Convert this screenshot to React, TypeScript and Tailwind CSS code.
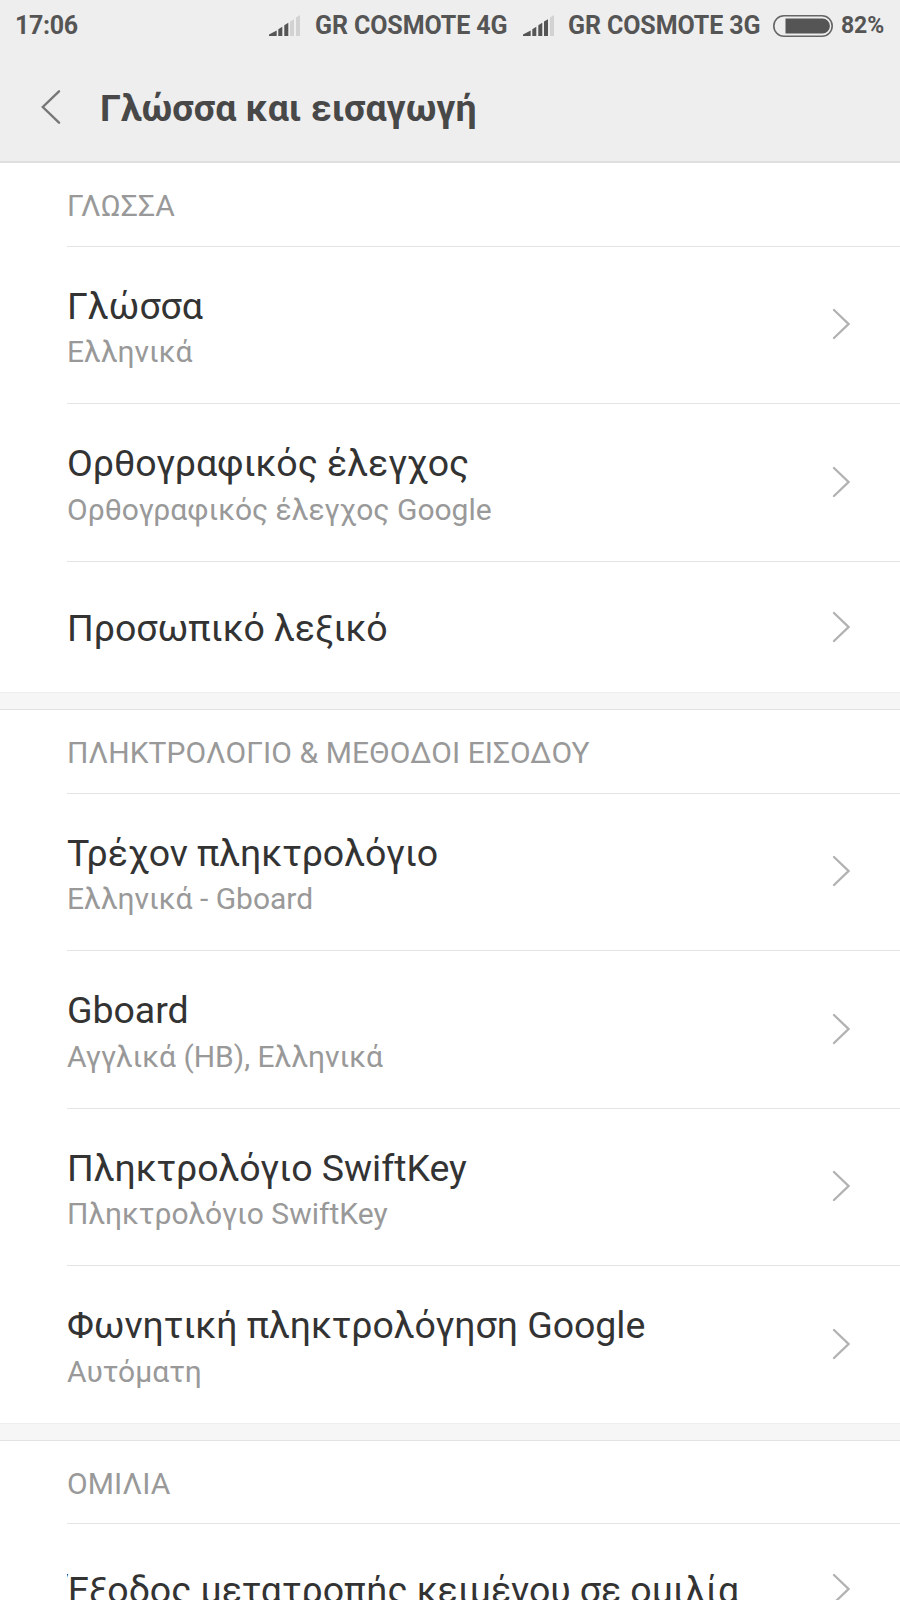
import React from "react";

type Item = {
  title: string;
  summary?: string;
};

type Section = {
  heading: string;
  items: Item[];
};

const sections: Section[] = [
  {
    heading: "ΓΛΩΣΣΑ",
    items: [
      { title: "Γλώσσα", summary: "Ελληνικά" },
      {
        title: "Ορθογραφικός έλεγχος",
        summary: "Ορθογραφικός έλεγχος Google",
      },
      { title: "Προσωπικό λεξικό" },
    ],
  },
  {
    heading: "ΠΛΗΚΤΡΟΛΟΓΙΟ & ΜΕΘΟΔΟΙ ΕΙΣΟΔΟΥ",
    items: [
      { title: "Τρέχον πληκτρολόγιο", summary: "Ελληνικά - Gboard" },
      { title: "Gboard", summary: "Αγγλικά (ΗΒ), Ελληνικά" },
      { title: "Πληκτρολόγιο SwiftKey", summary: "Πληκτρολόγιο SwiftKey" },
      { title: "Φωνητική πληκτρολόγηση Google", summary: "Αυτόματη" },
    ],
  },
  {
    heading: "ΟΜΙΛΙΑ",
    items: [{ title: "Έξοδος μετατροπής κειμένου σε ομιλία" }],
  },
];

const Signal: React.FC<{ level: number }> = ({ level }) => {
  const bars = [
    "M0 21V19.5L7.7 15.5V21Z",
    "M9.3 21V14.2L13.3 11.8V21Z",
    "M15.3 21V10.2L19.3 7.8V21Z",
    "M21 21V6.6L25 4.2V21Z",
    "M27 21V2.6L31 0V21Z",
  ];
  return (
    <svg width="31" height="21" viewBox="0 0 31 21" className="shrink-0">
      {bars.map((d, i) => (
        <path key={d} d={d} fill={i < level ? "#555555" : "#d2d2d2"} />
      ))}
    </svg>
  );
};

const Battery: React.FC = () => (
  <svg width="60" height="22" viewBox="0 0 60 22" className="shrink-0">
    <rect
      x="0.8"
      y="0.8"
      width="58.4"
      height="20.4"
      rx="10.2"
      fill="none"
      stroke="#666666"
      strokeWidth="1.6"
    />
    <path d="M12.5 3.6H49.5A7.4 7.4 0 0 1 49.5 18.4H12.5Z" fill="#555555" />
  </svg>
);

const Row: React.FC<{ item: Item }> = ({ item }) => (
  <div
    className={
      item.summary
        ? "flex h-[157.5px] items-start pt-[37px]"
        : "flex h-[131px] items-start pt-[44px]"
    }
  >
    <div className="min-w-0 flex-1 overflow-hidden">
      <div
        className={
          item.title.startsWith("Έ")
            ? "-indent-[1px] text-[37.5px] leading-[44px] tracking-[-0.08px] whitespace-nowrap text-[#333333]"
            : "text-[37.5px] leading-[44px] tracking-[-0.05px] whitespace-nowrap text-[#333333]"
        }
      >
        {item.title}
      </div>
      {item.summary && (
        <div className="mt-[6.5px] text-[30px] leading-[36px] whitespace-nowrap text-[#999999]">
          {item.summary}
        </div>
      )}
    </div>
    <svg
      width="18"
      height="32"
      viewBox="0 0 18 32"
      className={
        item.summary
          ? "mt-[24.5px] mr-[50px] shrink-0"
          : "mt-[5px] mr-[50px] shrink-0"
      }
      fill="none"
      stroke="#b2b2b2"
      strokeWidth="2.3"
      strokeLinecap="round"
    >
      <path d="M2 2L16.5 16L2 30" />
    </svg>
  </div>
);

const App: React.FC = () => {
  return (
    <div className="flex h-[1600px] w-[900px] flex-col overflow-hidden bg-white font-['Roboto',sans-serif]">
      <header className="h-[163px] shrink-0 border-b-2 border-[#dfdfdf] bg-[#eeeeee]">
        <div className="flex h-[51px] items-center pl-[15px] text-[25px] font-bold tracking-[-0.1px] text-[#555555]">
          <span className="w-[254px] pt-[1px] tracking-[-0.3px]">17:06</span>
          <Signal level={3} />
          <span className="ml-[15px] w-[208px] pt-[1px] whitespace-nowrap">
            GR COSMOTE 4G
          </span>
          <Signal level={4} />
          <span className="ml-[14px] w-[205px] pt-[1px] whitespace-nowrap">
            GR COSMOTE 3G
          </span>
          <Battery />
          <span className="ml-[8px] pt-[1px] text-[23px]">82%</span>
        </div>
        <div className="flex h-[110px] items-center pt-[2px]">
          <svg
            width="20"
            height="34"
            viewBox="0 0 20 34"
            className="ml-[41px] shrink-0"
            fill="none"
            stroke="#777777"
            strokeWidth="2.4"
            strokeLinecap="round"
          >
            <path d="M18 1.3L1.8 17L18 32.7" />
          </svg>
          <h1 className="ml-[39px] pt-[1px] text-[37.5px] leading-[44px] font-bold whitespace-nowrap text-[#484848]">
            Γλώσσα και εισαγωγή
          </h1>
        </div>
      </header>

      <main>
        {sections.map((section, i) => (
          <section key={section.heading}>
            {i > 0 && (
              <div className="h-[18px] border-t border-b border-t-[#eeeeee] border-b-[#e3e3e3] bg-[#f6f6f6]" />
            )}
            <div className="pl-[67px]">
              <h2 className="h-[82.8px] pt-[25px] text-[30px] leading-[36px] tracking-[0.08px] whitespace-nowrap text-[#999999]">
                {section.heading}
              </h2>
              {section.items.map((item) => (
                <div
                  key={item.title}
                  className="-mb-px border-t border-[#e4e4e4]"
                >
                  <Row item={item} />
                </div>
              ))}
            </div>
          </section>
        ))}
      </main>
    </div>
  );
};

export default App;
